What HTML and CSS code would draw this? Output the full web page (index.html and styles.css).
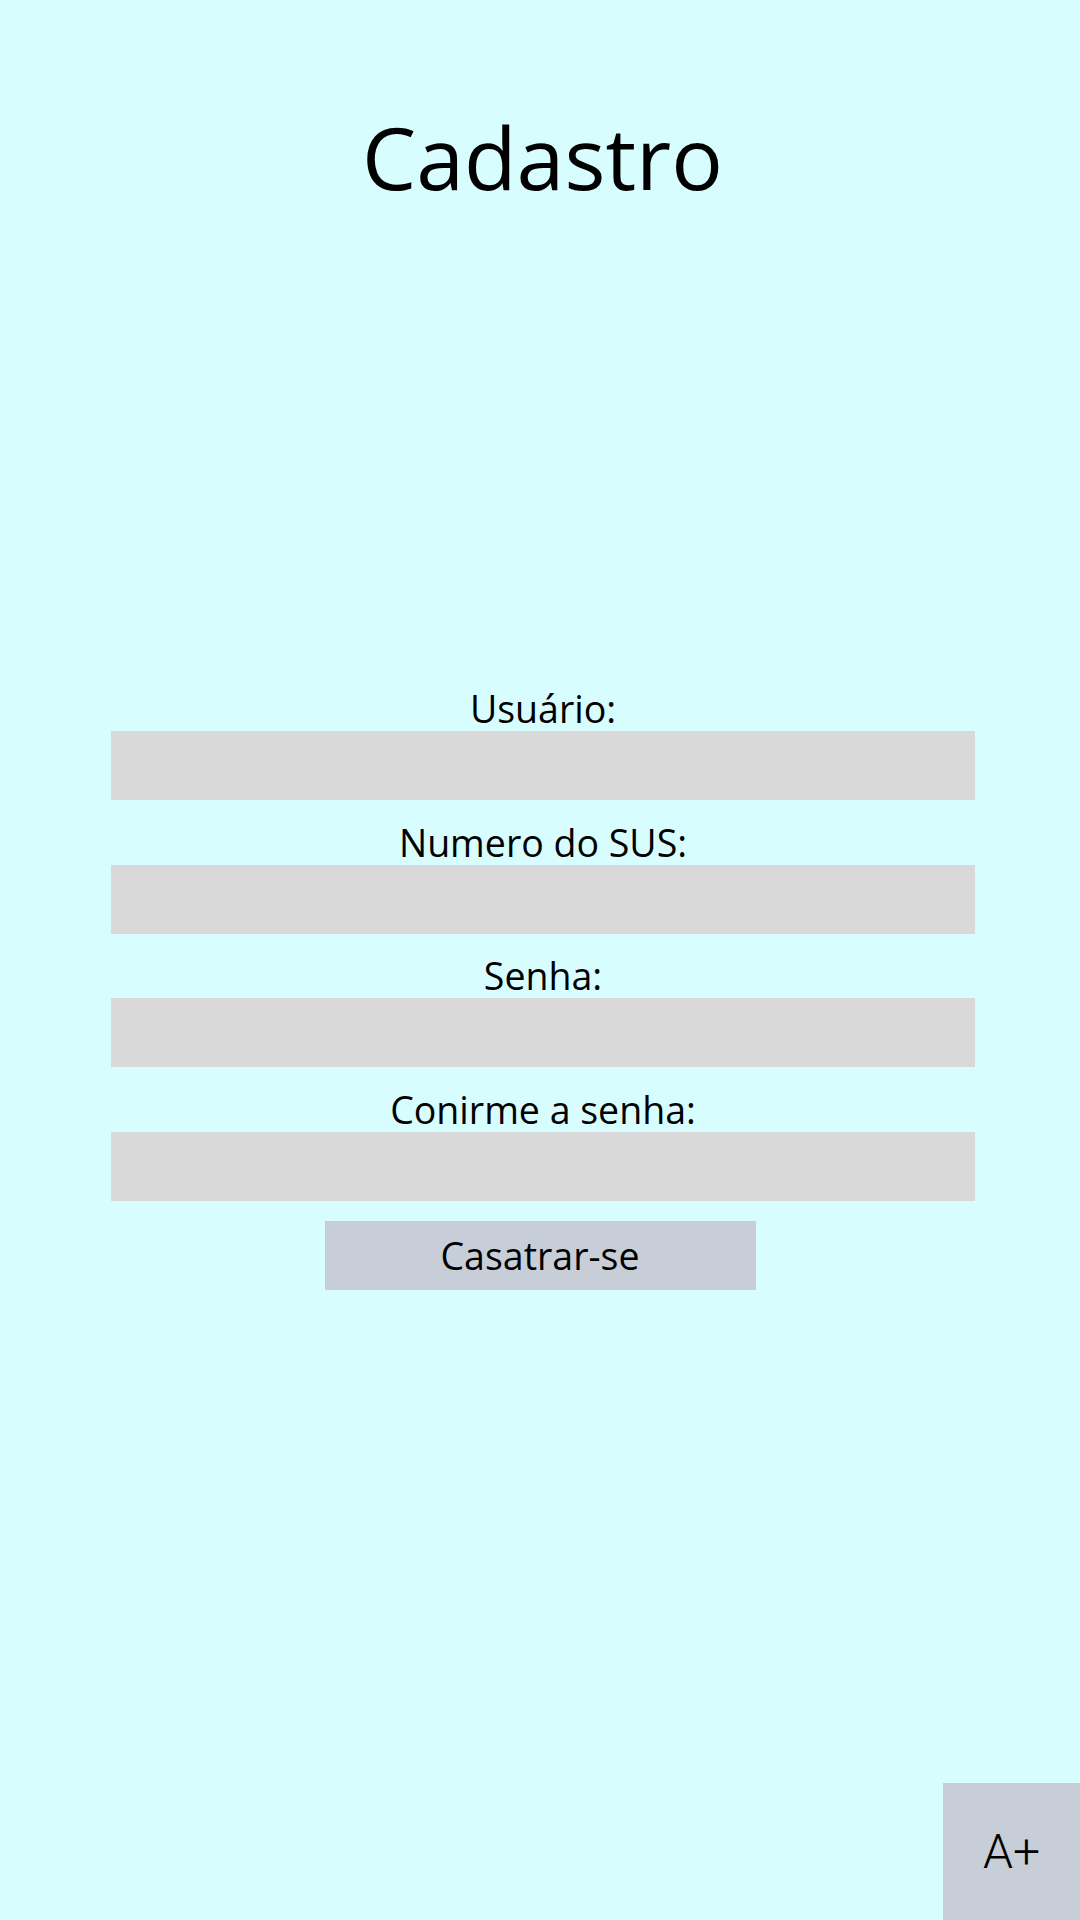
FILE: index.html
```html
<!DOCTYPE html>
<html lang="pt-BR">
<head>
    <meta charset="UTF-8">
    <meta name="viewport" content="width=device-width, initial-scale=1.0">
    <title>Cadastro</title>
    <link rel="stylesheet" href="styles.css">
</head>
<body>

    <div class="page">
        <h1 class="title">Cadastro</h1>

        <form class="form" action="#" method="POST">
            <label class="label" for="usuario">Usuário:</label>
            <input class="field" type="text" id="usuario" name="usuario">

            <label class="label" for="sus">Numero do SUS:</label>
            <input class="field" type="text" id="sus" name="sus">

            <label class="label" for="senha">Senha:</label>
            <input class="field" type="password" id="senha" name="senha">

            <label class="label" for="confirma">Conirme a senha:</label>
            <input class="field" type="password" id="confirma" name="confirma">

            <button class="btn" type="submit">Casatrar-se</button>
        </form>
    </div>

    <!-- botão de acessibilidade -->
    <button class="font-btn" type="button">A+</button>

</body>
</html>
```

FILE: styles.css
```css
body {
    margin: 0;
    background: #d8fdff;
    font-family: "Open Sans", sans-serif;
    color: #000;
    height: 1920px;
    overflow: hidden;
}

.page {
    display: flex;
    flex-direction: column;
    align-items: center;
}

.title {
    margin: 104px 0 0;
    font-size: 86px;
    font-weight: 400;
    line-height: 106px;
    padding-left: 5px;
}

.form {
    display: flex;
    flex-direction: column;
    align-items: center;
    width: 864px;
    margin: 476px 0 0 6px;
}

.label {
    font-size: 37.5px;
    line-height: 45px;
}

.field {
    box-sizing: border-box;
    width: 100%;
    height: 69px;
    margin: 0 0 19.5px;
    border: none;
    background: #d9d9d9;
    font-size: 30px;
    padding: 0 16px;
}

.btn {
    width: 431px;
    height: 69px;
    margin: 1px 0 0 -6px;
    border: none;
    background: #c7ced8;
    font-family: "Open Sans", sans-serif;
    font-size: 37.5px;
    color: #000;
    cursor: pointer;
}

.font-btn {
    position: fixed;
    right: 0;
    bottom: 0;
    width: 137px;
    height: 137px;
    border: none;
    background: #c7ced8;
    font-family: Roboto, sans-serif;
    font-size: 48px;
    font-weight: 300;
    color: #000;
    cursor: pointer;
}
```
